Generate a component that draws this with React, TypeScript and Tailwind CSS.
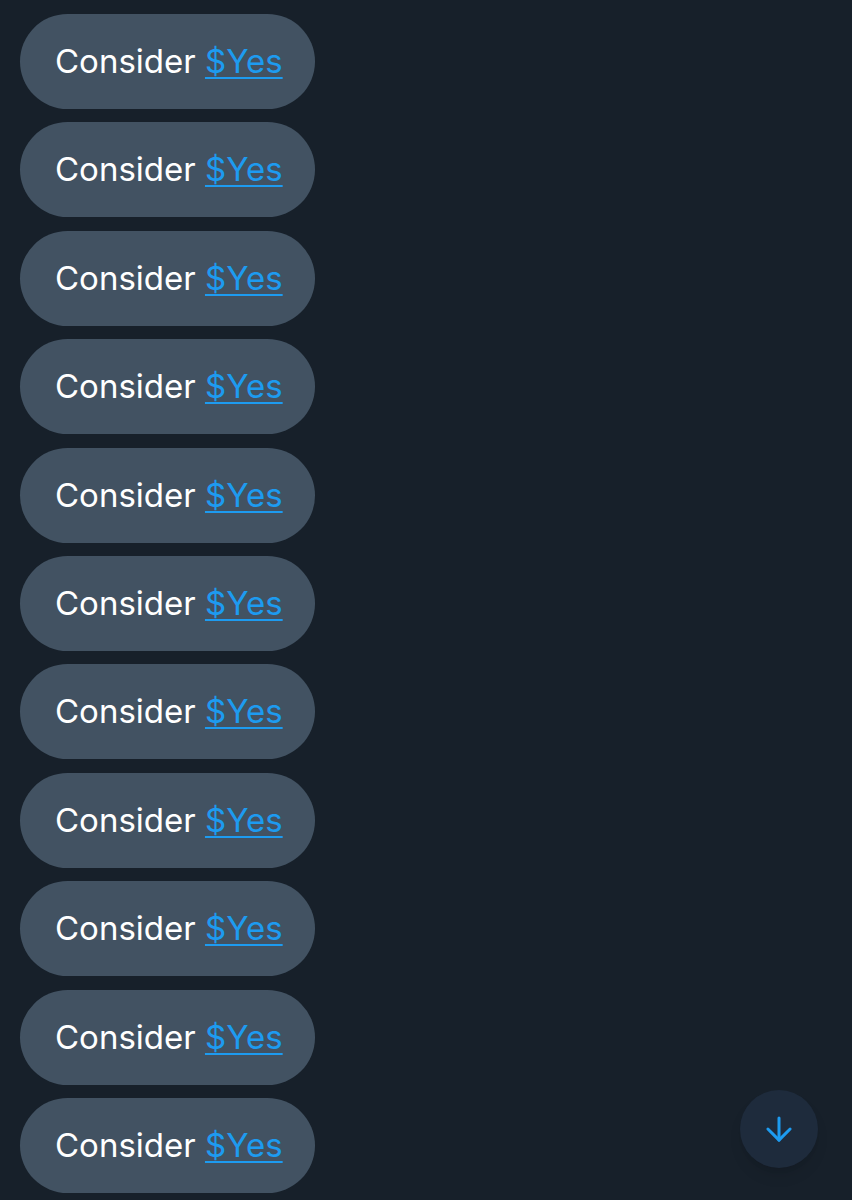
import React from 'react';
import { ArrowDown } from 'lucide-react';

const Bubble: React.FC = () => (
  <div className="flex h-[95px] w-[295px] items-center rounded-full bg-[#425262] pl-[35px]">
    <span className="text-[33px] leading-none text-white" style={{ fontFamily: 'Inter, "Liberation Sans", sans-serif' }}>
      Consider <span className="text-[#1d9bf0] underline decoration-2 underline-offset-4">$Yes</span>
    </span>
  </div>
);

const App: React.FC = () => {
  const items = Array.from({ length: 11 });

  return (
    <div className="relative h-[1200px] w-[852px] overflow-hidden bg-[#17202a]">
      <div className="flex flex-col gap-[13.4px] px-[20px] pt-[14px]">
        {items.map((_, i) => (
          <Bubble key={i} />
        ))}
      </div>

      {/* scroll to bottom */}
      <button className="absolute left-[740px] top-[1090px] flex h-[78px] w-[78px] items-center justify-center rounded-full bg-[#1e2b3c] shadow-lg">
        <ArrowDown className="h-[38px] w-[38px] text-[#1d9bf0]" strokeWidth={1.9} />
      </button>
    </div>
  );
};

export default App;
